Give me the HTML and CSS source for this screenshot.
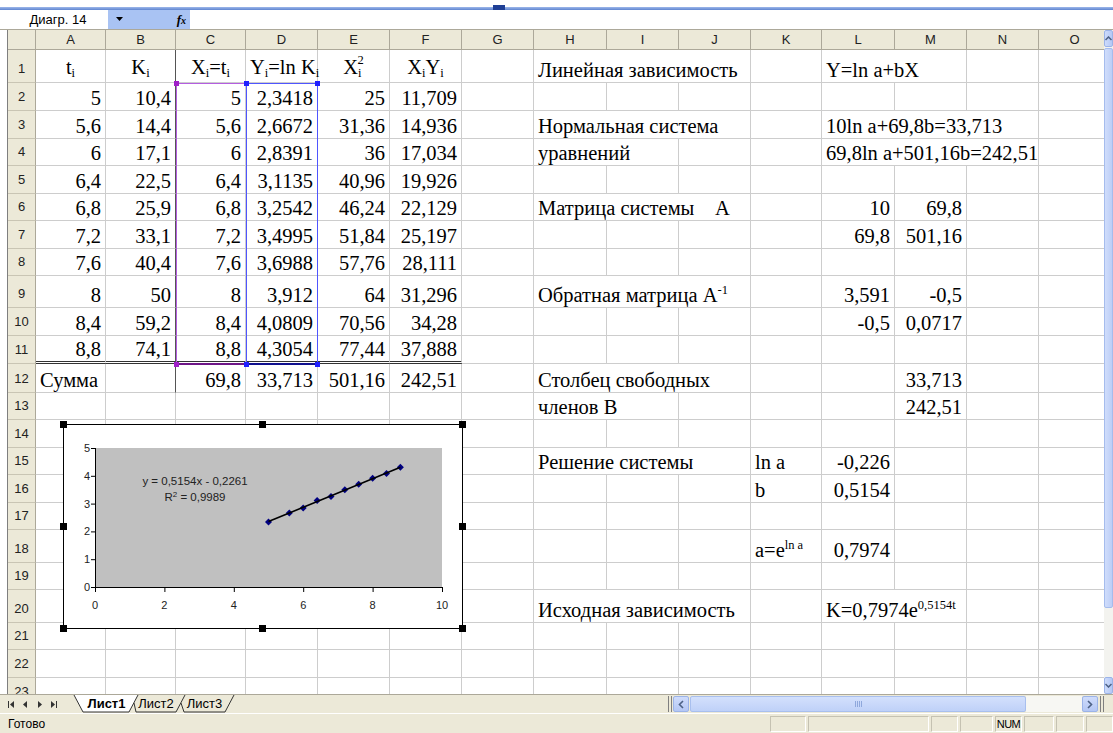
FILE: index.html
```html
<!DOCTYPE html>
<html lang="ru">
<head>
<meta charset="utf-8">
<title>Книга1 — Лист1</title>
<link rel="stylesheet" href="styles.css">
</head>
<body>
<div class="app">
  <div class="topline"><span class="tl-left"></span><span class="tl-notch"></span><span class="tl-right"></span></div>

  <div class="fbar">
    <div class="namebox">Диагр. 14</div>
    <div class="nbtn">
      <svg class="drop" width="8" height="5" viewBox="0 0 8 5"><path d="M0 0H7L3.5 4Z" fill="#000"/></svg>
      <span class="fx"><i>f</i><i class="fx-x">x</i></span>
    </div>
    <div class="finput"></div>
  </div>

  <div class="sheet">
    <div class="grid">
      <table class="cells">
        <colgroup>
          <col class="w28"><col class="w70"><col class="w70"><col class="w70">
          <col class="w72"><col class="w72"><col class="w72"><col class="w72">
          <col class="w73"><col class="w72"><col class="w72"><col class="w71">
          <col class="w73"><col class="w72"><col class="w72"><col class="w72">
        </colgroup>
        <tr class="h20 colheads"><th class="corner"></th><th>A</th><th>B</th><th>C</th><th>D</th><th>E</th><th>F</th><th>G</th><th>H</th><th>I</th><th>J</th><th>K</th><th>L</th><th>M</th><th>N</th><th>O</th></tr>

        <tr class="h33"><th>1</th>
          <td class="c">t<sub>i</sub></td><td class="c dk">K<sub>i</sub></td><td class="c">X<sub>i</sub>=t<sub>i</sub></td><td class="c">Y<sub>i</sub>=ln K<sub>i</sub></td><td class="c">X<sub>i</sub><sup class="pow">2</sup></td><td class="c">X<sub>i</sub>Y<sub>i</sub></td>
          <td></td><td colspan="3">Линейная зависимость</td><td></td><td colspan="2">Y=ln a+bX</td><td></td><td></td></tr>

        <tr class="h28"><th>2</th>
          <td class="n">5</td><td class="n dk">10,4</td><td class="n">5</td><td class="n">2,3418</td><td class="n">25</td><td class="n">11,709</td>
          <td></td><td></td><td></td><td></td><td></td><td></td><td></td><td></td><td></td></tr>

        <tr class="h28"><th>3</th>
          <td class="n">5,6</td><td class="n dk">14,4</td><td class="n">5,6</td><td class="n">2,6672</td><td class="n">31,36</td><td class="n">14,936</td>
          <td></td><td colspan="3">Нормальная система</td><td></td><td colspan="3">10ln a+69,8b=33,713</td><td></td></tr>

        <tr class="h27"><th>4</th>
          <td class="n">6</td><td class="n dk">17,1</td><td class="n">6</td><td class="n">2,8391</td><td class="n">36</td><td class="n">17,034</td>
          <td></td><td colspan="2">уравнений</td><td></td><td></td><td colspan="3">69,8ln a+501,16b=242,51</td><td></td></tr>

        <tr class="h28"><th>5</th>
          <td class="n">6,4</td><td class="n dk">22,5</td><td class="n">6,4</td><td class="n">3,1135</td><td class="n">40,96</td><td class="n">19,926</td>
          <td></td><td></td><td></td><td></td><td></td><td></td><td></td><td></td><td></td></tr>

        <tr class="h27"><th>6</th>
          <td class="n">6,8</td><td class="n dk">25,9</td><td class="n">6,8</td><td class="n">3,2542</td><td class="n">46,24</td><td class="n">22,129</td>
          <td></td><td colspan="3">Матрица системы&nbsp;&nbsp;&nbsp; А</td><td></td><td class="n">10</td><td class="n">69,8</td><td></td><td></td></tr>

        <tr class="h28"><th>7</th>
          <td class="n">7,2</td><td class="n dk">33,1</td><td class="n">7,2</td><td class="n">3,4995</td><td class="n">51,84</td><td class="n">25,197</td>
          <td></td><td></td><td></td><td></td><td></td><td class="n">69,8</td><td class="n">501,16</td><td></td><td></td></tr>

        <tr class="h27"><th>8</th>
          <td class="n">7,6</td><td class="n dk">40,4</td><td class="n">7,6</td><td class="n">3,6988</td><td class="n">57,76</td><td class="n">28,111</td>
          <td></td><td></td><td></td><td></td><td></td><td></td><td></td><td></td><td></td></tr>

        <tr class="h32"><th>9</th>
          <td class="n">8</td><td class="n dk">50</td><td class="n">8</td><td class="n">3,912</td><td class="n">64</td><td class="n">31,296</td>
          <td></td><td colspan="3">Обратная матрица A<sup>-1</sup></td><td></td><td class="n">3,591</td><td class="n">-0,5</td><td></td><td></td></tr>

        <tr class="h28"><th>10</th>
          <td class="n">8,4</td><td class="n dk">59,2</td><td class="n">8,4</td><td class="n">4,0809</td><td class="n">70,56</td><td class="n">34,28</td>
          <td></td><td></td><td></td><td></td><td></td><td class="n">-0,5</td><td class="n">0,0717</td><td></td><td></td></tr>

        <tr class="h28"><th>11</th>
          <td class="n dbl">8,8</td><td class="n dk dbl">74,1</td><td class="n dbl">8,8</td><td class="n dbl">4,3054</td><td class="n dbl">77,44</td><td class="n dbl">37,888</td>
          <td></td><td></td><td></td><td></td><td></td><td></td><td></td><td></td><td></td></tr>

        <tr class="h29"><th>12</th>
          <td>Сумма</td><td class="dk"></td><td class="n">69,8</td><td class="n">33,713</td><td class="n">501,16</td><td class="n">242,51</td>
          <td></td><td colspan="3">Столбец свободных</td><td></td><td></td><td class="n">33,713</td><td></td><td></td></tr>

        <tr class="h27"><th>13</th>
          <td></td><td></td><td></td><td></td><td></td><td></td>
          <td></td><td colspan="2">членов В</td><td></td><td></td><td></td><td class="n">242,51</td><td></td><td></td></tr>

        <tr class="h28"><th>14</th>
          <td></td><td></td><td></td><td></td><td></td><td></td><td></td><td></td><td></td><td></td><td></td><td></td><td></td><td></td><td></td></tr>

        <tr class="h27"><th>15</th>
          <td></td><td></td><td></td><td></td><td></td><td></td>
          <td></td><td colspan="3">Решение системы</td><td>ln a</td><td class="n">-0,226</td><td></td><td></td><td></td></tr>

        <tr class="h28"><th>16</th>
          <td></td><td></td><td></td><td></td><td></td><td></td>
          <td></td><td></td><td></td><td></td><td>b</td><td class="n">0,5154</td><td></td><td></td><td></td></tr>

        <tr class="h27"><th>17</th>
          <td></td><td></td><td></td><td></td><td></td><td></td><td></td><td></td><td></td><td></td><td></td><td></td><td></td><td></td><td></td></tr>

        <tr class="h33"><th>18</th>
          <td></td><td></td><td></td><td></td><td></td><td></td>
          <td></td><td></td><td></td><td></td><td>a=e<sup>ln a</sup></td><td class="n">0,7974</td><td></td><td></td><td></td></tr>

        <tr class="h27"><th>19</th>
          <td></td><td></td><td></td><td></td><td></td><td></td><td></td><td></td><td></td><td></td><td></td><td></td><td></td><td></td><td></td></tr>

        <tr class="h33"><th>20</th>
          <td></td><td></td><td></td><td></td><td></td><td></td>
          <td></td><td colspan="3">Исходная зависимость</td><td></td><td colspan="2">K=0,7974e<sup>0,5154t</sup></td><td></td><td></td></tr>

        <tr class="h27"><th>21</th>
          <td></td><td></td><td></td><td></td><td></td><td></td><td></td><td></td><td></td><td></td><td></td><td></td><td></td><td></td><td></td></tr>

        <tr class="h28"><th>22</th>
          <td></td><td></td><td></td><td></td><td></td><td></td><td></td><td></td><td></td><td></td><td></td><td></td><td></td><td></td><td></td></tr>

        <tr class="h28"><th>23</th>
          <td></td><td></td><td></td><td></td><td></td><td></td><td></td><td></td><td></td><td></td><td></td><td></td><td></td><td></td><td></td></tr>
      </table>

      <!-- chart source ranges: X values (C2:C11) and Y values (D2:D11) -->
      <div class="range range-x"><i class="hnd tl"></i><i class="hnd bl"></i></div>
      <div class="range range-y"><i class="hnd tl"></i><i class="hnd tr"></i><i class="hnd bl"></i><i class="hnd br"></i></div>

      <!-- embedded scatter chart with linear trendline -->
      <svg class="chart" width="406" height="212" viewBox="0 0 406 212">
        <rect x="3.5" y="3.5" width="399" height="204" fill="#fff" stroke="#000"/>
        <rect x="35" y="27" width="347" height="139" fill="#c0c0c0"/>
        <g stroke="#000" stroke-width="1">
          <line x1="35.5" y1="27" x2="35.5" y2="166.5"/>
          <line x1="35" y1="166.5" x2="382" y2="166.5"/>
          <line x1="31" y1="166.5" x2="35" y2="166.5"/>
          <line x1="31" y1="138.7" x2="35" y2="138.7"/>
          <line x1="31" y1="110.9" x2="35" y2="110.9"/>
          <line x1="31" y1="83.1" x2="35" y2="83.1"/>
          <line x1="31" y1="55.3" x2="35" y2="55.3"/>
          <line x1="31" y1="27.5" x2="35" y2="27.5"/>
          <line x1="35.5" y1="166" x2="35.5" y2="171"/>
          <line x1="104.9" y1="166" x2="104.9" y2="171"/>
          <line x1="174.3" y1="166" x2="174.3" y2="171"/>
          <line x1="243.7" y1="166" x2="243.7" y2="171"/>
          <line x1="313.1" y1="166" x2="313.1" y2="171"/>
          <line x1="382.5" y1="166" x2="382.5" y2="171"/>
        </g>
        <g class="axis-lbl" text-anchor="end">
          <text x="30" y="170">0</text>
          <text x="30" y="142">1</text>
          <text x="30" y="114">2</text>
          <text x="30" y="87">3</text>
          <text x="30" y="59">4</text>
          <text x="30" y="31">5</text>
        </g>
        <g class="axis-lbl" text-anchor="middle">
          <text x="35" y="188">0</text>
          <text x="104.4" y="188">2</text>
          <text x="173.8" y="188">4</text>
          <text x="243.2" y="188">6</text>
          <text x="312.6" y="188">8</text>
          <text x="382" y="188">10</text>
        </g>
        <g fill="#000080">
          <path d="M208.5 97.4l3.5 3.5-3.5 3.5-3.5-3.5z"/>
          <path d="M229.3 88.4l3.5 3.5-3.5 3.5-3.5-3.5z"/>
          <path d="M243.2 83.6l3.5 3.5-3.5 3.5-3.5-3.5z"/>
          <path d="M257.1 75.9l3.5 3.5-3.5 3.5-3.5-3.5z"/>
          <path d="M271 72l3.5 3.5-3.5 3.5-3.5-3.5z"/>
          <path d="M284.8 65.2l3.5 3.5-3.5 3.5-3.5-3.5z"/>
          <path d="M298.7 59.7l3.5 3.5-3.5 3.5-3.5-3.5z"/>
          <path d="M312.6 53.7l3.5 3.5-3.5 3.5-3.5-3.5z"/>
          <path d="M326.5 49.1l3.5 3.5-3.5 3.5-3.5-3.5z"/>
          <path d="M340.4 42.8l3.5 3.5-3.5 3.5-3.5-3.5z"/>
        </g>
        <line x1="208.5" y1="100.6" x2="340.4" y2="46.2" stroke="#000" stroke-width="1.6"/>
        <g class="eq" text-anchor="middle">
          <text x="135" y="64">y = 0,5154x - 0,2261</text>
          <text x="135" y="80">R<tspan class="eq-sup" dy="-4">2</tspan><tspan dy="4"> = 0,9989</tspan></text>
        </g>
        <g fill="#000">
          <rect x="0" y="0" width="7" height="7"/>
          <rect x="199" y="0" width="7" height="7"/>
          <rect x="399" y="0" width="7" height="7"/>
          <rect x="0" y="102" width="7" height="7"/>
          <rect x="399" y="102" width="7" height="7"/>
          <rect x="0" y="204" width="7" height="7"/>
          <rect x="199" y="204" width="7" height="7"/>
          <rect x="399" y="204" width="7" height="7"/>
        </g>
      </svg>
    </div>

    <div class="vscroll">
      <div class="vs-btn"><svg width="7" height="5" viewBox="0 0 7 5"><path d="M0.5 4L3.5 1L6.5 4" fill="none" stroke="#4d6185" stroke-width="1.5"/></svg></div>
      <div class="vs-thumb"></div>
      <div class="vs-track"></div>
      <div class="vs-btn"><svg width="7" height="5" viewBox="0 0 7 5"><path d="M0.5 1L3.5 4L6.5 1" fill="none" stroke="#4d6185" stroke-width="1.5"/></svg></div>
    </div>
  </div>

  <div class="tabbar">
    <div class="tabnav">
      <svg width="62" height="18" viewBox="0 0 62 18">
        <g fill="#333">
          <rect x="7" y="6" width="1" height="7"/><path d="M13 6v7l-4-3.5z"/>
          <path d="M26 6v7l-4-3.5z"/>
          <path d="M37 6v7l4-3.5z"/>
          <path d="M50 6v7l4-3.5z"/><rect x="55" y="6" width="1" height="7"/>
        </g>
      </svg>
    </div>
    <svg class="tabs" width="606" height="18" viewBox="0 0 606 18">
      <path d="M119 8L122 17H163L172 0" fill="none" stroke="#333"/>
      <path d="M72 8L74 17H114L123 0" fill="none" stroke="#333"/>
      <path d="M12 0L21 17H67L76 0" fill="#fff" stroke="#333"/>
      <text class="tab-txt tab-on" x="44.5" y="13" text-anchor="middle">Лист1</text>
      <text class="tab-txt" x="94" y="13" text-anchor="middle">Лист2</text>
      <text class="tab-txt" x="142.5" y="13" text-anchor="middle">Лист3</text>
    </svg>
    <div class="hscroll">
      <span class="split"></span>
      <span class="hs-btn"><svg width="6" height="9" viewBox="0 0 6 9"><path d="M5 1L1.5 4.5L5 8" fill="none" stroke="#4d6185" stroke-width="1.6"/></svg></span>
      <span class="hs-thumb"><i class="grip"></i></span>
      <span class="hs-track"></span>
      <span class="hs-btn"><svg width="6" height="9" viewBox="0 0 6 9"><path d="M1 1L4.5 4.5L1 8" fill="none" stroke="#4d6185" stroke-width="1.6"/></svg></span>
      <span class="split split-r"></span>
    </div>
  </div>

  <div class="status">
    <span class="ready">Готово</span>
    <span class="panels">
      <span class="p w36"></span><span class="p w121"></span><span class="p w27"></span><span class="p w33"></span><span class="p w27">NUM</span><span class="p w30"></span><span class="p w28"></span><span class="p w27"></span>
    </span>
  </div>
</div>
</body>
</html>
```

FILE: styles.css
```css
* { box-sizing: border-box; }

html, body {
  margin: 0;
  background: #fff;
}

body {
  width: 1113px;
  height: 733px;
  overflow: hidden;
  font-family: "Liberation Sans", Arial, sans-serif;
  color: #000;
}

.app {
  display: flex;
  flex-direction: column;
  height: 733px;
}

/* thin window strip above the formula bar */
.topline {
  height: 10px;
  display: flex;
  align-items: flex-end;
}
.tl-left, .tl-right {
  height: 3px;
  background: linear-gradient(#9db8ea, #5f84d0);
}
.tl-left { width: 493px; }
.tl-right { flex: 1; }
.tl-notch {
  width: 12px;
  height: 5px;
  background: #1f3f95;
}

/* formula bar */
.fbar {
  height: 20px;
  display: flex;
  border-bottom: 1px solid #aca899;
}
.namebox {
  width: 100px;
  margin-left: 8px;
  background: #fff;
  font-size: 13px;
  line-height: 19px;
  text-align: center;
}
.nbtn {
  width: 82px;
  background: #a9c3f3;
  display: flex;
  align-items: center;
}
.drop { margin-left: 8px; }
.fx {
  margin-left: auto;
  margin-right: 4px;
  font-family: "Liberation Serif", serif;
  font-weight: bold;
  font-size: 13px;
  line-height: 1;
}
.fx-x { font-size: 10px; }
.finput { flex: 1; background: #fff; }

/* worksheet */
.sheet {
  height: 664px;
  display: flex;
  padding-left: 7px;
}
.grid {
  width: 1097px;
  height: 664px;
  border-left: 1px solid #7f7f7f;
  overflow: hidden;
  position: relative;
}

.cells {
  border-spacing: 0;
  table-layout: fixed;
  width: 1103px;
}
.w28 { width: 28px; }
.w70 { width: 70px; }
.w71 { width: 71px; }
.w72 { width: 72px; }
.w73 { width: 73px; }

.h20 { height: 20px; }
.h27 { height: 27px; }
.h28 { height: 28px; }
.h29 { height: 29px; }
.h32 { height: 32px; }
.h33 { height: 33px; }

.cells th {
  background: #ece9d8;
  font-weight: normal;
  font-size: 13px;
  color: #222;
  padding: 0;
  border-right: 1px solid #aca899;
  border-bottom: 1px solid #c9c5b4;
  text-align: center;
  vertical-align: bottom;
  padding-bottom: 6px;
  line-height: 15px;
}
.colheads th {
  vertical-align: middle;
  padding-bottom: 0;
  border-bottom: 1px solid #aca899;
  border-right: 1px solid #aca899;
}

.cells td {
  border-right: 1px solid #cdcdcd;
  border-bottom: 1px solid #cdcdcd;
  padding: 0 4px 0 4px;
  vertical-align: bottom;
  font-family: "Liberation Serif", "Times New Roman", serif;
  font-size: 20.5px;
  line-height: 23px;
  white-space: nowrap;
}
.cells td.n { text-align: right; }
.cells td.c { text-align: center; padding-bottom: 3px; }
.cells td.dk { border-right-color: #555; }
.cells td.dbl { border-bottom: 3px double #333; }

.cells sub {
  font-size: 12.5px;
  line-height: 0;
  vertical-align: -3px;
}
.cells sup {
  font-size: 12.5px;
  line-height: 0;
  vertical-align: 8px;
}
.cells sup.pow { margin-left: -4px; vertical-align: 10px; }

/* highlighted source ranges of the selected chart */
.range {
  position: absolute;
  top: 53px;
  height: 282px;
  border: 1px solid;
  border-bottom-width: 2px;
  pointer-events: none;
}
.range-x {
  left: 168px;
  width: 71px;
  border-color: #b45ee0;
  border-bottom-color: #6e1687;
}
.range-y {
  left: 238px;
  width: 72px;
  border-color: #4f55ff;
  border-bottom-color: #10108e;
}
.hnd {
  position: absolute;
  width: 5px;
  height: 5px;
}
.range-x .hnd { background: #a020c8; }
.range-y .hnd { background: #2020ff; }
.hnd.tl { left: -3px; top: -3px; }
.hnd.tr { right: -3px; top: -3px; }
.hnd.bl { left: -3px; bottom: -4px; }
.hnd.br { right: -3px; bottom: -4px; }

.chart {
  position: absolute;
  left: 52px;
  top: 391px;
}
.axis-lbl {
  font-family: "Liberation Sans", Arial, sans-serif;
  font-size: 11px;
  fill: #222;
}
.eq {
  font-family: "Liberation Sans", Arial, sans-serif;
  font-size: 11.5px;
  fill: #222;
}
.eq-sup { font-size: 8px; }

/* vertical scroll bar (partly visible at the window edge) */
.vscroll {
  width: 9px;
  height: 664px;
  display: flex;
  flex-direction: column;
  background: #f3f3ef;
}
.vs-btn {
  height: 17px;
  background: linear-gradient(90deg, #cddbfb, #b4c8f5);
  border: 1px solid #9bb3e8;
  border-radius: 2px;
  display: flex;
  align-items: center;
  justify-content: center;
  overflow: hidden;
}
.vs-thumb {
  height: 560px;
  background: linear-gradient(90deg, #d0ddfb, #bccef7);
  border: 1px solid #a5bced;
  border-radius: 2px;
  margin-top: 1px;
}
.vs-track { flex: 1; }

/* sheet tabs + horizontal scroll bar */
.tabbar {
  height: 19px;
  display: flex;
  background: #ece9d8;
  border-top: 1px solid #aca899;
}
.tabnav {
  width: 62px;
  padding-left: 1px;
}
.tabs {
  width: 606px;
  height: 18px;
  display: block;
}
.tab-txt {
  font-family: "Liberation Sans", Arial, sans-serif;
  font-size: 13px;
  fill: #000;
}
.tab-on { font-weight: bold; }

.hscroll {
  width: 436px;
  display: flex;
  align-items: stretch;
  padding: 1px 0;
}
.split {
  width: 4px;
  border-left: 1px solid #7f7f7f;
  border-right: 1px solid #7f7f7f;
  margin-right: 1px;
}
.split-r { margin-left: 2px; margin-right: 0; }
.hs-btn {
  width: 16px;
  background: linear-gradient(#cfdcfb, #b4c7f4);
  border: 1px solid #9bb3e8;
  border-radius: 2px;
  display: flex;
  align-items: center;
  justify-content: center;
}
.hs-thumb {
  width: 336px;
  margin-left: 1px;
  background: linear-gradient(#d3e0fc, #bfd1f8);
  border: 1px solid #a8bfee;
  border-radius: 2px;
  display: flex;
  align-items: center;
  justify-content: center;
}
.grip {
  width: 7px;
  height: 6px;
  background: repeating-linear-gradient(90deg, #8fa8dc 0 1px, transparent 1px 2px);
}
.hs-track {
  flex: 1;
  background: #f7f7f3;
}

/* status bar */
.status {
  height: 20px;
  display: flex;
  align-items: center;
  background: #ece9d8;
  font-size: 12px;
  border-top: 1px solid #fff;
}
.ready { margin-left: 8px; }
.panels {
  margin-left: auto;
  display: flex;
  gap: 2px;
  height: 16px;
}
.p {
  border-top: 1px solid #c5c2b2;
  border-left: 1px solid #c5c2b2;
  border-bottom: 1px solid #fff;
  border-right: 1px solid #fff;
  font-size: 11px;
  line-height: 14px;
  text-align: center;
  letter-spacing: -0.5px;
}
.w36 { width: 36px; }
.w121 { width: 121px; }
.w27 { width: 27px; }
.w33 { width: 33px; }
.w30 { width: 30px; }
.w28 { width: 28px; }
```
